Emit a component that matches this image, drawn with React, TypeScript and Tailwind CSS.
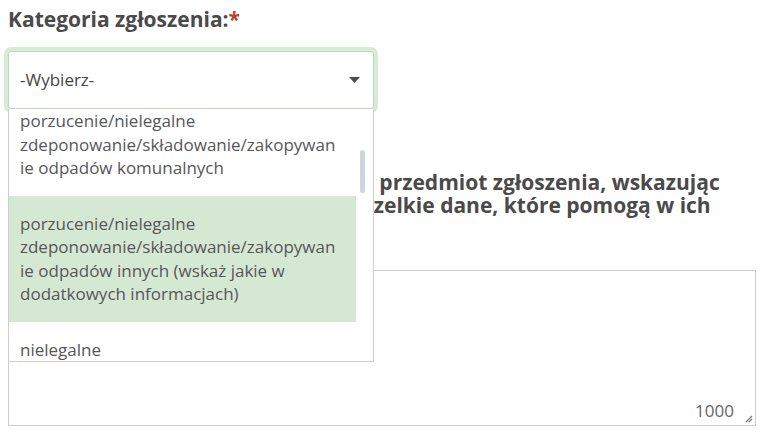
import { useState } from 'react'

const options = [
  { id: 'komunalne', label: 'porzucenie/nielegalne zdeponowanie/składowanie/zakopywanie odpadów komunalnych' },
  { id: 'inne', label: 'porzucenie/nielegalne zdeponowanie/składowanie/zakopywanie odpadów innych (wskaż jakie w dodatkowych informacjach)' },
  { id: 'zbieranie', label: 'nielegalne zbieranie/przetwarzanie/magazynowanie odpadów' },
]

export default function App() {
  const [hovered, setHovered] = useState('inne')
  const [text, setText] = useState('')

  return (
    <div className="min-h-screen bg-white px-2 pt-[5px] font-['Open_Sans',sans-serif] text-[#4a4a4a]">
      <h2 className="text-[21px] font-bold leading-[28px]">
        Kategoria zgłoszenia:<span className="text-[#b5472a]">*</span>
      </h2>

      {/* Select */}
      <div className="relative mt-[18px] w-[366px]">
        <div className="flex h-[58px] items-center justify-between rounded-[3px] border border-[#bfd9be] bg-white pl-[11px] pr-[13px] ring-4 ring-[#d8ebd7]">
          <span className="text-[17px] text-[#454545]">-Wybierz-</span>
          <svg width="11" height="6" viewBox="0 0 11 6">
            <path d="M0 0h11L5.5 6z" fill="#4d4d4d" />
          </svg>
        </div>

        {/* Open list */}
        <div className="absolute left-0 top-full z-10 h-[253px] w-[366px] overflow-hidden border border-[#cfcfcf] border-t-0 bg-white">
          <div className="-mt-[16px] mr-[17px]">
            {options.map((o) => (
              <div
                key={o.id}
                onMouseEnter={() => setHovered(o.id)}
                className={`break-words py-[16px] pl-[11px] pr-[18px] text-[17px] leading-[23.5px] text-[#575757] ${
                  hovered === o.id ? 'bg-[#d5e8d4]' : ''
                }`}
              >
                {o.label}
              </div>
            ))}
          </div>
          <div className="absolute right-[8px] top-[41px] h-[43px] w-[5px] rounded-full bg-[#cdd6da]" />
        </div>
      </div>

      {/* Description */}
      <h2 className="mt-[62px] w-[747px] text-[21px] font-bold leading-[23px]">
        Prosimy opisać możliwie dokładnie przedmiot zgłoszenia, wskazując miejsce, ilość, rodzaj, skalę oraz wszelkie dane, które pomogą w ich identyfikacji:
      </h2>
      <div className="relative mt-[30px] h-[156px] w-[748px] border border-[#cfcfcf] bg-white">
        <textarea
          value={text}
          onChange={(e) => setText(e.target.value)}
          maxLength={1000}
          className="h-full w-full resize-none bg-transparent p-3 text-[17px] outline-none"
        />
        <span className="absolute bottom-[2px] right-[21px] text-[17px] text-[#666]">{1000 - text.length}</span>
        <svg className="absolute bottom-[2px] right-[2px]" width="9" height="9" viewBox="0 0 9 9">
          <path d="M8 2L2 8M8 5L5 8" stroke="#777" strokeWidth="1.2" />
        </svg>
      </div>
    </div>
  )
}
